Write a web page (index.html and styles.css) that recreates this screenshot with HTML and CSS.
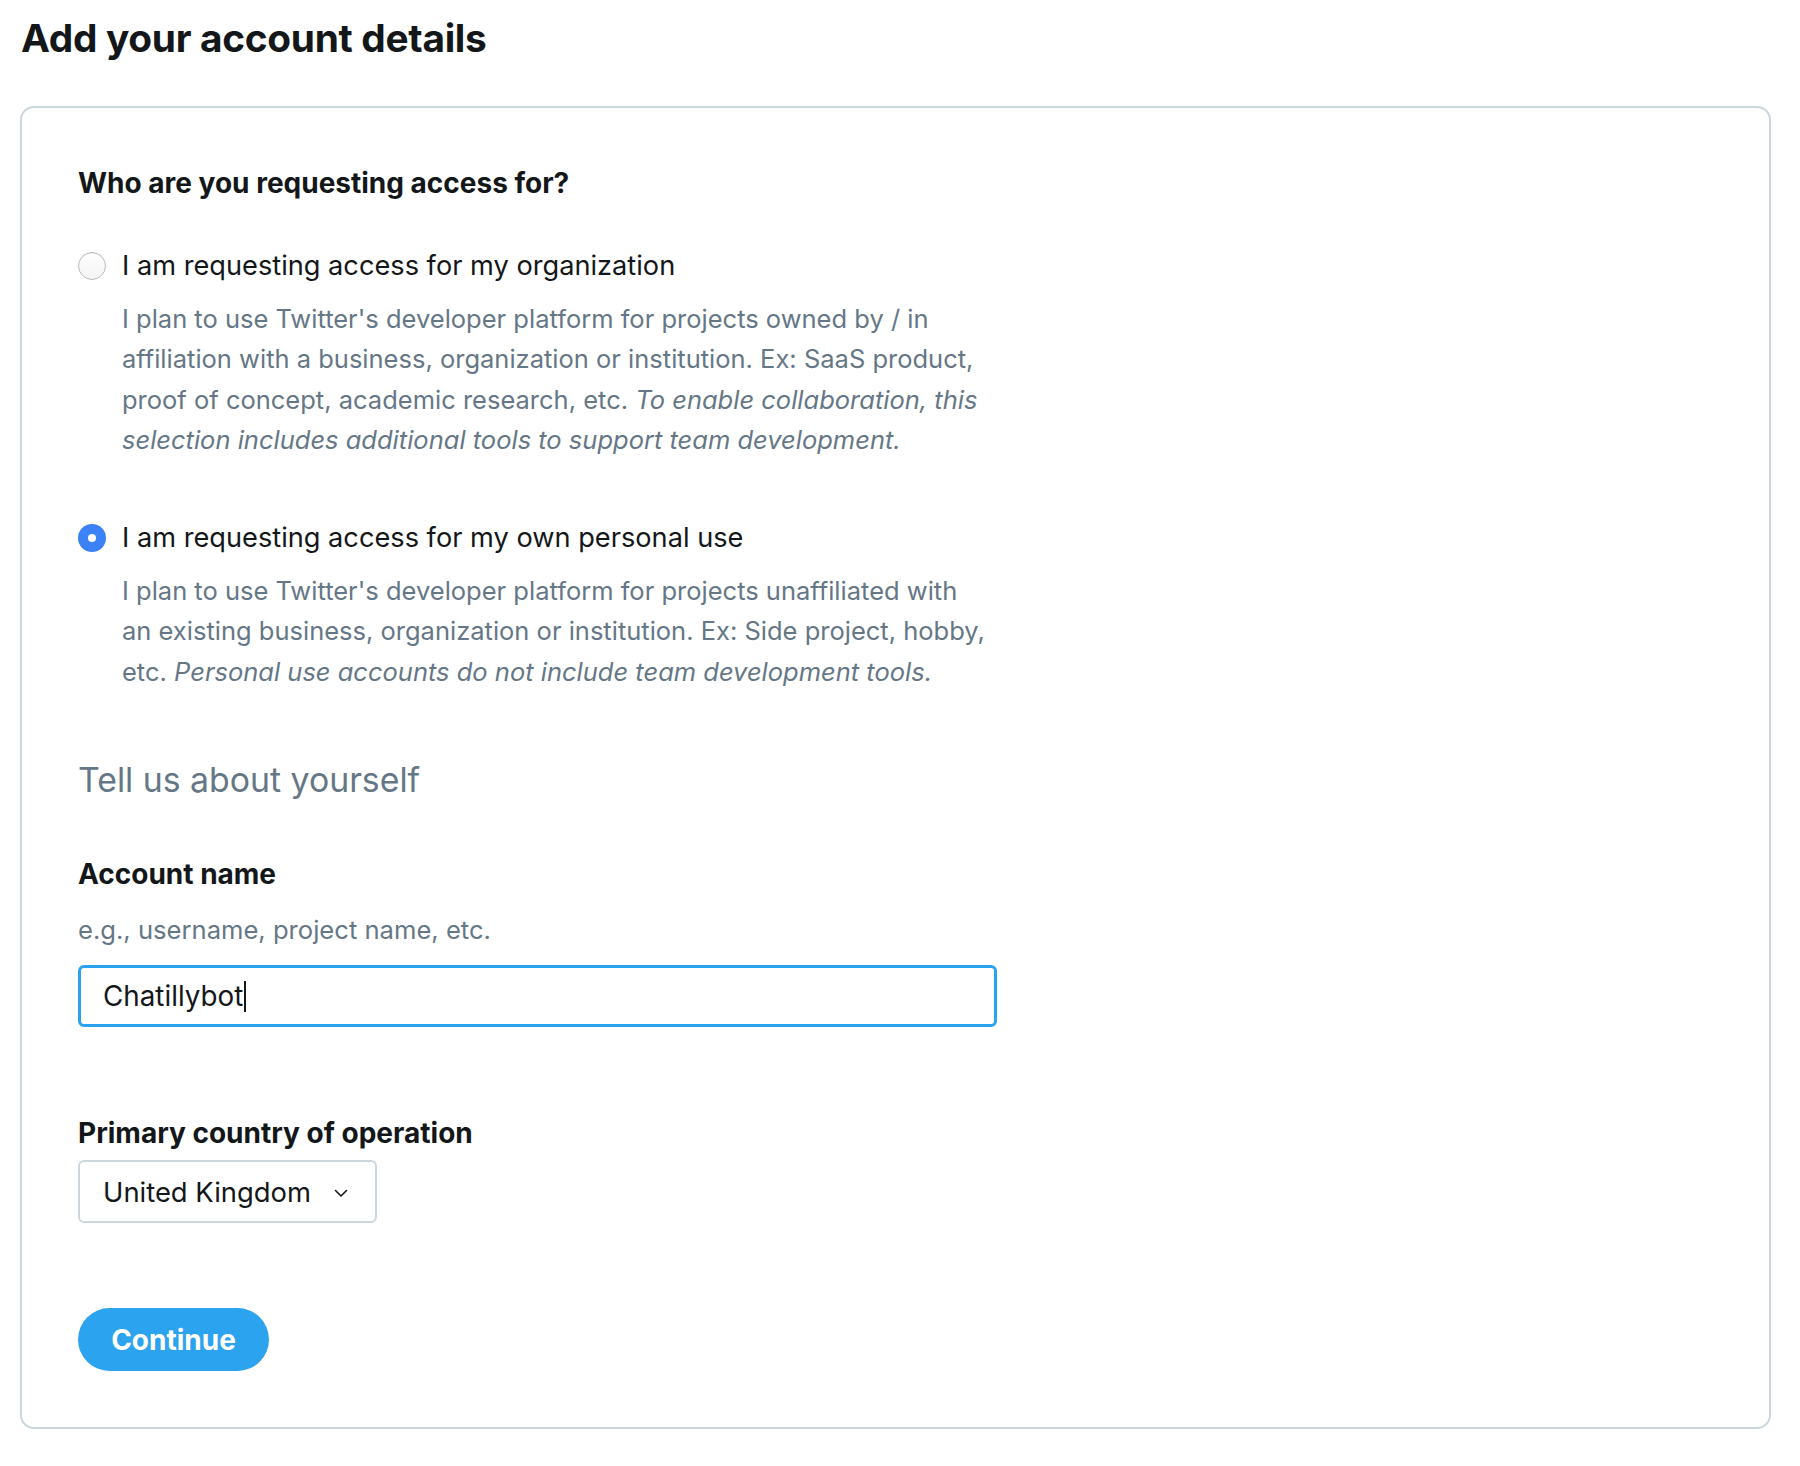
FILE: index.html
```html
<!DOCTYPE html>
<html lang="en">
<head>
<meta charset="utf-8">
<title>Add your account details</title>
<link rel="stylesheet" href="styles.css">
</head>
<body>
<h1 class="page-title">Add your account details</h1>
<div class="card">
  <div class="col">
    <h2 class="question">Who are you requesting access for?</h2>

    <div class="option">
      <div class="option-row">
        <span class="radio"></span>
        <span class="option-label">I am requesting access for my organization</span>
      </div>
      <p class="option-desc">I plan to use Twitter's developer platform for projects owned by / in affiliation with a business, organization or institution. Ex: SaaS product, proof of concept, academic research, etc. <em>To enable collaboration, this selection includes additional tools to support team development.</em></p>
    </div>

    <div class="option option-second">
      <div class="option-row">
        <span class="radio radio-checked"></span>
        <span class="option-label">I am requesting access for my own personal use</span>
      </div>
      <p class="option-desc">I plan to use Twitter's developer platform for projects unaffiliated with an existing business, organization or institution. Ex: Side project, hobby, etc. <em>Personal use accounts do not include team development tools.</em></p>
    </div>

    <h3 class="section-title">Tell us about yourself</h3>

    <div class="field-label">Account name</div>
    <div class="field-hint">e.g., username, project name, etc.</div>
    <div class="text-input"><span class="input-value">Chatillybot</span><span class="caret"></span></div>

    <div class="field-label country-label">Primary country of operation</div>
    <div class="select">
      <span class="select-value">United Kingdom</span>
      <svg class="chevron" width="14" height="9" viewBox="0 0 14 9"><path d="M1.5 1.5 L7 7 L12.5 1.5" fill="none" stroke="#14171a" stroke-width="1.6" stroke-linecap="round" stroke-linejoin="round"/></svg>
    </div>

    <button class="continue">Continue</button>
  </div>
</div>
</body>
</html>
```

FILE: styles.css
```css
* { box-sizing: border-box; }
html, body { margin: 0; padding: 0; background: #fff; }
body {
  font-family: Inter, "Noto Sans", "Liberation Sans", sans-serif;
  color: #14171a;
  width: 1800px;
}
.page-title {
  margin: 0;
  padding: 15px 0 0 21px;
  font-size: 38.8px;
  line-height: 46px;
  font-weight: 700;
  letter-spacing: -0.3px;
  height: 106px;
}
.card {
  margin-left: 20px;
  width: 1751px;
  height: 1323px;
  border: 2px solid #ccd6dd;
  border-radius: 14px;
  padding: 59px 56px 56px 56px;
}
.col {
  width: 919px;
  display: flex;
  flex-direction: column;
  align-items: flex-start;
}
.question {
  margin: 0;
  font-size: 28px;
  line-height: 32px;
  font-weight: 700;
}
.option {
  margin-top: 49px;
  width: 100%;
}
.option-second { margin-top: 60px; }
.option-row {
  display: flex;
  align-items: center;
  height: 36px;
}
.radio {
  width: 28px;
  height: 28px;
  border-radius: 50%;
  border: 1.5px solid #b9b9b9;
  background: linear-gradient(#ffffff, #f3f3f3);
  box-shadow: inset 0 1px 1px rgba(0,0,0,0.06);
  flex: none;
  margin-right: 16px;
}
.radio-checked {
  border: none;
  background: #3b82f6;
  box-shadow: none;
  position: relative;
}
.radio-checked::after {
  content: "";
  position: absolute;
  left: 10px;
  top: 10px;
  width: 8px;
  height: 8px;
  border-radius: 50%;
  background: #fff;
}
.option-label {
  font-size: 27.2px;
  line-height: 36px;
}
.option-desc {
  margin: 15px 0 0 44px;
  width: 866px;
  font-size: 25.5px;
  line-height: 40.3px;
  color: #657786;
}
.option-desc em { font-style: italic; }
.section-title {
  margin: 68px 0 0 0;
  font-size: 33.8px;
  line-height: 40px;
  font-weight: 400;
  color: #657786;
}
.field-label {
  margin-top: 58px;
  font-size: 28px;
  line-height: 32px;
  font-weight: 700;
}
.field-hint {
  margin-top: 24px;
  font-size: 25.6px;
  line-height: 32px;
  color: #657786;
}
.text-input {
  margin-top: 19px;
  width: 919px;
  height: 62px;
  border: 3px solid #2aa3ef;
  border-radius: 6px;
  display: flex;
  align-items: center;
  padding-left: 22px;
  font-size: 27.8px;
}
.caret {
  display: inline-block;
  width: 2px;
  height: 31px;
  background: #14171a;
  margin-left: 1px;
}
.country-label { margin-top: 90px; }
.select {
  margin-top: 11px;
  width: 299px;
  height: 63px;
  border: 2px solid #ccd6dd;
  border-radius: 6px;
  display: flex;
  align-items: center;
  padding-left: 23px;
  font-size: 27.4px;
}
.chevron { margin-left: 23px; margin-top: 3px; }
.continue {
  margin-top: 85px;
  width: 191px;
  height: 63px;
  border: none;
  border-radius: 32px;
  background: #2ca3ef;
  color: #fff;
  font-family: inherit;
  font-size: 28px;
  font-weight: 700;
  padding: 0;
}
```
